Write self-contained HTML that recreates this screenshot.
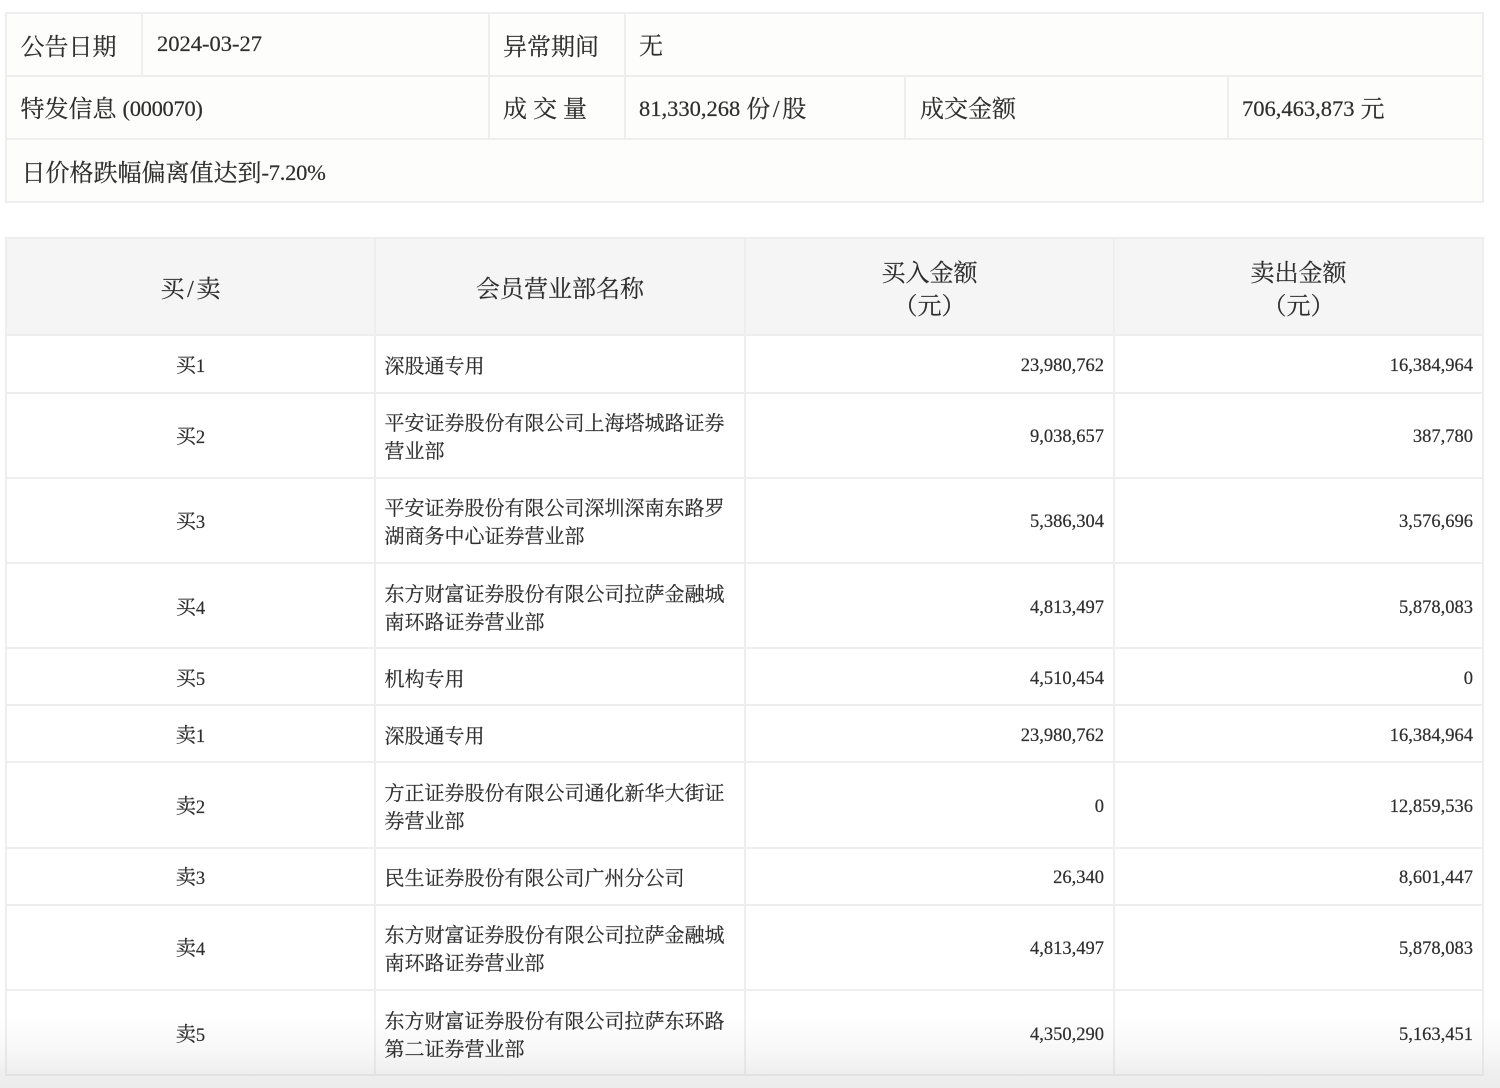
<!DOCTYPE html>
<html lang="zh-CN"><head><meta charset="utf-8"><title>公告</title>
<style>
html,body{margin:0;padding:0;background:#fff}
body{width:1500px;height:1088px;position:relative;overflow:hidden;font-family:"Liberation Serif","Noto Serif CJK SC",serif;color:#2e2e2e;-webkit-text-stroke:.2px #2e2e2e}
.bx{position:absolute}
.l{position:absolute;background:#eee}
.v{background:linear-gradient(#eee 40%,#e3e3e3)}
.t{position:absolute;white-space:nowrap;font-size:24px;line-height:34px;height:34px}
.t b{font-weight:400;font-size:22.5px;position:relative;top:-1px}
.s{position:absolute;white-space:nowrap;font-size:20px;line-height:28px}
.s b{font-weight:400;font-size:18.5px}
.c{text-align:center}
.r{text-align:right}
.sl{display:inline-block;width:12px;text-align:center}
.fade{position:absolute;left:0;top:1015px;width:1500px;height:73px;background:linear-gradient(rgba(238,238,238,0),rgba(238,238,238,.45) 50%,rgba(238,238,238,1) 82%,rgba(236,236,236,1))}
</style></head><body>
<div class="bx" style="left:5px;top:12px;width:1479px;height:191px;background:#fdfdfb"></div>
<div class="bx" style="left:5px;top:237px;width:1479px;height:98px;background:#f5f5f5"></div>
<div class="fade"></div>

<div class="l" style="left:5px;top:12px;width:1479px;height:2px"></div>
<div class="l" style="left:5px;top:75px;width:1479px;height:2px"></div>
<div class="l" style="left:5px;top:138px;width:1479px;height:2px"></div>
<div class="l" style="left:5px;top:201px;width:1479px;height:2px"></div>
<div class="l" style="left:5px;top:12px;width:2px;height:191px"></div>
<div class="l" style="left:1482px;top:12px;width:2px;height:191px"></div>
<div class="l" style="left:141px;top:12px;width:2px;height:64px"></div>
<div class="l" style="left:488px;top:12px;width:2px;height:127px"></div>
<div class="l" style="left:624px;top:12px;width:2px;height:127px"></div>
<div class="l" style="left:904px;top:76px;width:2px;height:63px"></div>
<div class="l" style="left:1227px;top:76px;width:2px;height:63px"></div>

<div class="t" style="left:20.5px;top:31px">公告日期</div>
<div class="t" style="left:157px;top:28px"><b>2024-03-27</b></div>
<div class="t" style="left:503px;top:31px">异常期间</div>
<div class="t" style="left:639px;top:30px">无</div>
<div class="t" style="left:20.5px;top:93px">特发信息 <b style="letter-spacing:-.3px">(000070)</b></div>
<div class="t" style="left:503px;top:93px">成 交 量</div>
<div class="t" style="left:639px;top:93px"><b>81,330,268</b> 份<span class="sl">/</span>股</div>
<div class="t" style="left:920px;top:93px">成交金额</div>
<div class="t" style="left:1242px;top:93px"><b>706,463,873</b> 元</div>
<div class="t" style="left:21.5px;top:157px">日价格跌幅偏离值达到<b style="letter-spacing:-.25px">-7.20%</b></div>

<div class="l" style="left:5px;top:237px;width:1479px;height:2px"></div>
<div class="l" style="left:5px;top:334px;width:1479px;height:2px"></div>
<div class="l" style="left:5px;top:392px;width:1479px;height:2px"></div>
<div class="l" style="left:5px;top:477px;width:1479px;height:2px"></div>
<div class="l" style="left:5px;top:562px;width:1479px;height:2px"></div>
<div class="l" style="left:5px;top:647px;width:1479px;height:2px"></div>
<div class="l" style="left:5px;top:704px;width:1479px;height:2px"></div>
<div class="l" style="left:5px;top:761px;width:1479px;height:2px"></div>
<div class="l" style="left:5px;top:847px;width:1479px;height:2px"></div>
<div class="l" style="left:5px;top:904px;width:1479px;height:2px"></div>
<div class="l" style="left:5px;top:989px;width:1479px;height:2px"></div>
<div class="l" style="left:5px;top:237px;width:2px;height:753px"></div>
<div class="l" style="left:374px;top:237px;width:2px;height:753px"></div>
<div class="l" style="left:744px;top:237px;width:2px;height:753px"></div>
<div class="l" style="left:1113px;top:237px;width:2px;height:753px"></div>
<div class="l" style="left:1482px;top:237px;width:2px;height:753px"></div>
<div class="l v" style="left:5px;top:990px;width:2px;height:86px"></div>
<div class="l v" style="left:374px;top:990px;width:2px;height:86px"></div>
<div class="l v" style="left:744px;top:990px;width:2px;height:86px"></div>
<div class="l v" style="left:1113px;top:990px;width:2px;height:86px"></div>
<div class="l v" style="left:1482px;top:990px;width:2px;height:86px"></div>
<div class="l" style="left:5px;top:1074px;width:1479px;height:2px;background:#e2e2e2"></div>

<div class="t c" style="left:7px;width:367px;top:273px">买<span class="sl">/</span>卖</div>
<div class="t c" style="left:376px;width:368px;top:273px">会员营业部名称</div>
<div class="t c" style="left:746px;width:367px;top:257px">买入金额</div>
<div class="t c" style="left:746px;width:367px;top:290px">（元）</div>
<div class="t c" style="left:1115px;width:367px;top:257px">卖出金额</div>
<div class="t c" style="left:1115px;width:367px;top:290px">（元）</div>

<div class="s c" style="left:7px;width:367px;top:352px">买<b>1</b></div>
<div class="s" style="left:384.5px;top:353px">深股通专用</div>
<div class="s r" style="right:396px;top:351px"><b>23,980,762</b></div>
<div class="s r" style="right:27px;top:351px"><b>16,384,964</b></div>

<div class="s c" style="left:7px;width:367px;top:423px">买<b>2</b></div>
<div class="s" style="left:384.5px;top:410px">平安证券股份有限公司上海塔城路证券<br>营业部</div>
<div class="s r" style="right:396px;top:422px"><b>9,038,657</b></div>
<div class="s r" style="right:27px;top:422px"><b>387,780</b></div>

<div class="s c" style="left:7px;width:367px;top:508px">买<b>3</b></div>
<div class="s" style="left:384.5px;top:495px">平安证券股份有限公司深圳深南东路罗<br>湖商务中心证券营业部</div>
<div class="s r" style="right:396px;top:507px"><b>5,386,304</b></div>
<div class="s r" style="right:27px;top:507px"><b>3,576,696</b></div>

<div class="s c" style="left:7px;width:367px;top:594px">买<b>4</b></div>
<div class="s" style="left:384.5px;top:581px">东方财富证券股份有限公司拉萨金融城<br>南环路证券营业部</div>
<div class="s r" style="right:396px;top:593px"><b>4,813,497</b></div>
<div class="s r" style="right:27px;top:593px"><b>5,878,083</b></div>

<div class="s c" style="left:7px;width:367px;top:665px">买<b>5</b></div>
<div class="s" style="left:384.5px;top:666px">机构专用</div>
<div class="s r" style="right:396px;top:664px"><b>4,510,454</b></div>
<div class="s r" style="right:27px;top:664px"><b>0</b></div>

<div class="s c" style="left:7px;width:367px;top:722px">卖<b>1</b></div>
<div class="s" style="left:384.5px;top:723px">深股通专用</div>
<div class="s r" style="right:396px;top:721px"><b>23,980,762</b></div>
<div class="s r" style="right:27px;top:721px"><b>16,384,964</b></div>

<div class="s c" style="left:7px;width:367px;top:793px">卖<b>2</b></div>
<div class="s" style="left:384.5px;top:780px">方正证券股份有限公司通化新华大街证<br>券营业部</div>
<div class="s r" style="right:396px;top:792px"><b>0</b></div>
<div class="s r" style="right:27px;top:792px"><b>12,859,536</b></div>

<div class="s c" style="left:7px;width:367px;top:864px">卖<b>3</b></div>
<div class="s" style="left:384.5px;top:865px">民生证券股份有限公司广州分公司</div>
<div class="s r" style="right:396px;top:863px"><b>26,340</b></div>
<div class="s r" style="right:27px;top:863px"><b>8,601,447</b></div>

<div class="s c" style="left:7px;width:367px;top:935px">卖<b>4</b></div>
<div class="s" style="left:384.5px;top:922px">东方财富证券股份有限公司拉萨金融城<br>南环路证券营业部</div>
<div class="s r" style="right:396px;top:934px"><b>4,813,497</b></div>
<div class="s r" style="right:27px;top:934px"><b>5,878,083</b></div>

<div class="s c" style="left:7px;width:367px;top:1021px">卖<b>5</b></div>
<div class="s" style="left:384.5px;top:1008px">东方财富证券股份有限公司拉萨东环路<br>第二证券营业部</div>
<div class="s r" style="right:396px;top:1020px"><b>4,350,290</b></div>
<div class="s r" style="right:27px;top:1020px"><b>5,163,451</b></div>
</body></html>
